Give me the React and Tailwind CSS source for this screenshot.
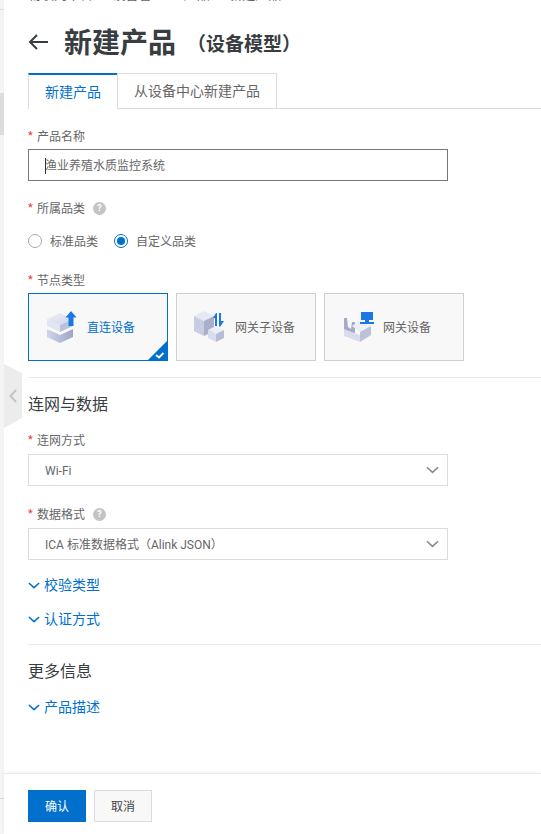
import React from 'react';

const Label = ({ text, help }) => (
  <div className="flex items-center h-[18px] text-xs text-[#666]">
    <span className="text-[#e33] w-[8px] text-[11px]">*</span>
    <span className="ml-[1px] pt-[2px]">{text}</span>
    {help && (
      <span className="ml-[8px] w-[13px] h-[13px] rounded-full bg-[#c4c4c4] text-white text-[9px] font-bold flex items-center justify-center">?</span>
    )}
  </div>
);

const Chevron = ({ className }) => (
  <svg viewBox="0 0 14 8" className={className} fill="none" stroke="currentColor" strokeWidth="1.7">
    <path d="M1 1l6 5.500L13 1" />
  </svg>
);

const Select = ({ value }) => (
  <div className="mt-[5px] w-[420px] h-[32px] border border-[#dcdcdc] flex items-center justify-between pl-[16px] pr-[8px] text-xs text-[#666]">
    <span className="pt-[2px]">{value}</span>
    <Chevron className="w-[13px] h-[8px] text-[#888]" />
  </div>
);

const Expand = ({ text, className }) => (
  <div className={`flex items-center text-sm text-[#0070cc] ${className}`}>
    <Chevron className="w-[12px] h-[7px]" />
    <span className="ml-[4px]">{text}</span>
  </div>
);

const CubeUp = () => (
  <svg width="30" height="32" viewBox="0 0 30 32">
    <defs>
      <linearGradient id="upTop" x1="0" y1="0" x2="1" y2="1">
        <stop offset="0" stopColor="#eef0f8" />
        <stop offset="1" stopColor="#cfd3e8" />
      </linearGradient>
      <linearGradient id="upLow" x1="0" y1="0" x2="1" y2="0">
        <stop offset="0" stopColor="#d0d4e8" />
        <stop offset="1" stopColor="#9fa5c6" />
      </linearGradient>
    </defs>
    <path d="M0 18l13 6 13-6v8l-13 6-13-6z" fill="url(#upLow)" />
    <path d="M0 8l13-6 13 6-13 6z" fill="url(#upTop)" />
    <path d="M0 8l13 6v7L0 15z" fill="#e2e5f2" />
    <path d="M13 14l13-6v7l-13 6z" fill="#bcc1da" />
    <path d="M24 0l5.500 6.500H26.500V15h-5V6.500H18.500z" fill="#1a78e6" />
  </svg>
);

const CubeSwap = () => (
  <svg width="32" height="32" viewBox="0 0 32 32">
    <path d="M0 5l10-5 10 5-10 5z" fill="#e6e8f4" />
    <path d="M0 5l10 5v15L0 20z" fill="#c9cde2" />
    <path d="M10 10l10-5v15l-10 5z" fill="#a9aecb" />
    <path d="M14 19l8-4 8 4-8 4z" fill="#eceef7" />
    <path d="M14 19l8 4v8l-8-4z" fill="#d9dcec" />
    <path d="M22 23l8-4v8l-8 4z" fill="#b8bdd6" />
    <path d="M22 2l-3 5h2v8h2V2zM25 2h2v8h3l-4 6-1-1z" fill="#1a78e6" />
  </svg>
);

const Gateway = () => (
  <svg width="32" height="30" viewBox="0 0 32 30">
    <path d="M1 6h3l1 9 3 2 1-7h3v12H1z" fill="#a4aacb" />
    <path d="M9 14l9-6 10 6-11 6z" fill="#eef0f8" />
    <path d="M1 17l5 2 11 4v7L1 24z" fill="#d9dcec" />
    <path d="M17 20l11-6v9l-11 7z" fill="#bcc1da" />
    <path d="M18 0h12v8h-4v2h5v2H17v-2h5V8h-4z" fill="#1a78e6" />
  </svg>
);

const NodeCard = ({ icon, active }) => (
  <div className={`relative w-[140px] h-[68px] flex items-center bg-[#f8f8f8] text-xs border ${active ? 'border-[#0070cc] text-[#0070cc]' : 'border-[#d0d0d0] text-[#666]'}`}>
    {icon}
    {active && (
      <svg className="absolute right-[-1px] bottom-[-1px]" width="21" height="21" viewBox="0 0 21 21">
        <path d="M21 0v21H0z" fill="#0070cc" />
        <path d="M9 15l3 2.500 4.500-4.500" fill="none" stroke="#fff" strokeWidth="1.800" />
      </svg>
    )}
  </div>
);

const Radio = ({ text, checked }) => (
  <div className="flex items-center text-xs text-[#666]">
    <span className={`w-[14px] h-[14px] rounded-full border flex items-center justify-center ${checked ? 'border-[#0070cc]' : 'border-[#aaa]'}`}>
      {checked && <span className="w-[8px] h-[8px] rounded-full bg-[#0070cc]" />}
    </span>
    <span className="ml-[8px] pt-[2px]">{text}</span>
  </div>
);

export default function App() {
  return (
    <div className="relative w-[541px] h-[834px] overflow-hidden flex bg-white font-['Roboto','Noto_Sans_CJK_SC','Liberation_Sans',sans-serif]">
      {/* page behind the drawer */}
      <div className="w-[4px] h-full bg-[#f4f4f4] shrink-0 flex flex-col">
        <div className="h-px mt-[9px] bg-[#e0e0e0]" />
        <div className="h-[42px] mt-[83px] bg-[#dcdcdc]" />
        <div className="h-px mt-[663px] bg-[#dcdcdc]" />
      </div>

      {/* collapse handle */}
      <div className="absolute left-[4px] top-[364px] w-[18px] h-[64px] bg-[#ececec] [clip-path:polygon(0_0,100%_9px,100%_54px,0_100%)] flex items-center justify-center">
        <svg width="8" height="14" viewBox="0 0 8 14" fill="none" stroke="#c4c4c4" strokeWidth="2"><path d="M7 1L1.500 7 7 13" /></svg>
      </div>

      <div className="flex-1 flex flex-col">
        <div className="h-[2px] overflow-hidden text-[13px] text-[#666] pl-[24px] leading-[2px]">
          <span className="relative top-[-6px] flex gap-[7px]">
            <span>物联网平台</span><span>/</span><span>设备管理</span><span>/</span><span>产品</span><span>/</span><span>新建产品</span>
          </span>
        </div>

        <div className="flex-1 pl-[24px]">
          {/* title */}
          <div className="flex items-center h-[46px] mt-[17px] text-[#373d41]">
            <svg width="20" height="16" viewBox="0 0 20 16" fill="none" stroke="currentColor" strokeWidth="2"><path d="M20 8H2M9 1L2 8l7 7" /></svg>
            <span className="ml-[16px] pt-[4px] text-[28px] font-bold">新建产品</span>
            <span className="ml-[11px] pt-[6px] text-[19px] font-bold">（设备模型）</span>
          </div>

          {/* tabs */}
          <div className="flex h-[36px] mt-[8px] border-b border-[#dcdcdc] text-sm">
            <div className="w-[89px] h-[36px] border-t-2 border-t-[#0070cc] border-l border-l-[#dcdcdc] bg-white text-[#0070cc] flex items-center justify-center">新建产品</div>
            <div className="w-[160px] h-[35px] border border-b-0 border-[#dcdcdc] text-[#666] flex items-center justify-center">从设备中心新建产品</div>
          </div>

          <div className="mt-[18px]"><Label text="产品名称" /></div>
          <div className="relative mt-[4px] w-[420px] h-[32px] border border-[#777] flex items-center pl-[16px] pt-[2px] text-xs text-[#666]">
            <span className="absolute left-[16px] top-[8px] w-px h-[16px] bg-[#333]" />
            渔业养殖水质监控系统
          </div>

          <div className="mt-[18px]"><Label text="所属品类" help /></div>
          <div className="flex gap-[16px] h-[18px] mt-[15px] items-center">
            <Radio text="标准品类" />
            <Radio text="自定义品类" checked />
          </div>

          <div className="mt-[21px]"><Label text="节点类型" /></div>
          <div className="flex gap-[8px] mt-[4px]">
            <NodeCard active icon={<><span className="ml-[18px]"><CubeUp /></span><span className="ml-[10px] pt-[2px]">直连设备</span></>} />
            <NodeCard icon={<><span className="ml-[17px]"><CubeSwap /></span><span className="ml-[9px] pt-[2px]">网关子设备</span></>} />
            <NodeCard icon={<><span className="ml-[18px]"><Gateway /></span><span className="ml-[8px] pt-[2px]">网关设备</span></>} />
          </div>

          <div className="mt-[16px] border-t border-[#eaeaea]" />
          <div className="mt-[15px] h-[22px] pt-[2px] flex items-center text-base text-[#373d41]">连网与数据</div>

          <div className="mt-[16px]"><Label text="连网方式" /></div>
          <Select value="Wi-Fi" />

          <div className="mt-[19px]"><Label text="数据格式" help /></div>
          <Select value="ICA 标准数据格式（Alink JSON）" />

          <Expand text="校验类型" className="mt-[15px] h-[20px]" />
          <Expand text="认证方式" className="mt-[14px] h-[20px]" />

          <div className="mt-[15px] border-t border-[#eaeaea]" />
          <div className="mt-[14px] h-[22px] pt-[4px] flex items-center text-base text-[#373d41]">更多信息</div>
          <Expand text="产品描述" className="mt-[16px] h-[20px]" />
        </div>

        {/* footer */}
        <div className="h-[61px] border-t border-[#eaeaea] shadow-[0_-1px_3px_rgba(0,0,0,0.05)] pl-[24px] pt-[16px] flex gap-[8px] text-xs">
          <button className="w-[58px] h-[32px] pt-[2px] bg-[#0070cc] text-white">确认</button>
          <button className="w-[58px] h-[32px] pt-[2px] bg-[#f8f8f8] border border-[#dcdcdc] text-[#444]">取消</button>
        </div>
      </div>
    </div>
  );
}
